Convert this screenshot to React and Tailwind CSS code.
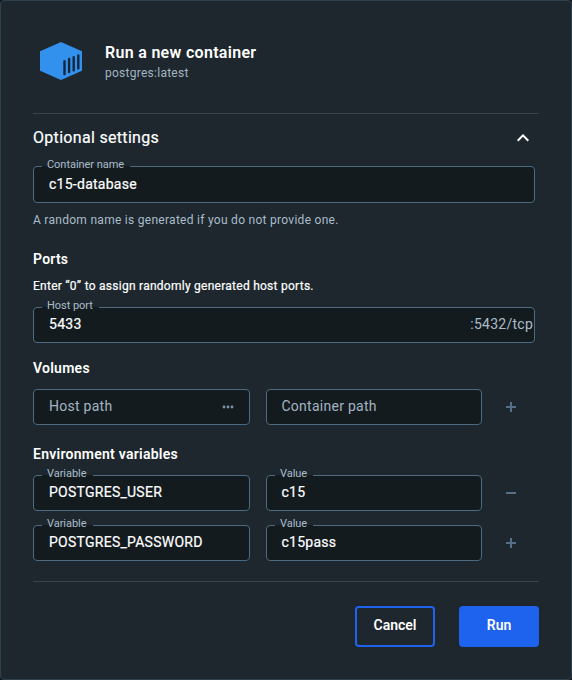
import React from "react";

function PlusIcon() {
  return (
    <svg width="10" height="10" viewBox="0 0 10 10" fill="#5d7890" shapeRendering="crispEdges">
      <path d="M4 0h2v4h4v2H6v4H4V6H0V4h4z" fillOpacity="0.9" />
    </svg>
  );
}

function MinusIcon() {
  return (
    <svg width="10" height="10" viewBox="0 0 10 10" fill="#5d7890" shapeRendering="crispEdges">
      <rect x="0" y="4" width="10" height="2" fillOpacity="0.9" />
    </svg>
  );
}

function ContainerIcon() {
  return (
    <svg width="42" height="38" viewBox="0 0 42 38">
      <path d="M21 0 42 9.2V28.8L21 38 0 28.8V9.2Z" fill="#3391ee" />
      <g stroke="#14273a" strokeWidth="2.4" strokeLinecap="round">
        <path d="M24.5 19.2V32M29.1 16.9V30M33.7 15.1V28.4M38.3 13.4V26.4" />
      </g>
    </svg>
  );
}

function Field({ label, value, placeholder, className = "", children }) {
  return (
    <div className={`relative flex items-center rounded bg-[#141b1f] ${className}`}>
      <fieldset className="pointer-events-none absolute inset-x-0 -top-[8px] bottom-0 min-w-0 rounded border border-[#4c6a82] px-[8px]">
        {label ? (
          <legend className="h-[17px] pl-[5px] pr-[6px] text-[11px] leading-[13px] tracking-[-0.04px] text-[#aabccb]">{label}</legend>
        ) : (
          <legend className="h-[17px] w-0" />
        )}
      </fieldset>
      <span
        className={`grow pb-[2px] text-[14px] leading-[20px] tracking-[0.26px] ${value ? "text-white [-webkit-text-stroke:0.2px_white]" : "text-[#a3b4c3]"}`}
      >
        {value || placeholder}
      </span>
      {children}
    </div>
  );
}

export default function App() {
  return (
    <div className="h-[680px] w-[572px] bg-[#12181b] font-['Roboto',sans-serif] text-white">
      <div className="flex h-full flex-col rounded-[4px] border border-[#2d3f4d] bg-[#1d272d] pl-8 pr-8">
        <header className="flex h-[112px] items-center gap-[23px] pt-2 pl-[7px]">
          <ContainerIcon />
          <div className="flex flex-col pt-[2px]">
            <h1 className="text-[16px] font-semibold leading-[22px] tracking-[0.3px]">Run a new container</h1>
            <p className="text-[12px] leading-[18px] tracking-[0.26px] text-[#a3b4c3]">postgres:latest</p>
          </div>
        </header>
        <div className="h-px bg-[#36444b]" />

        <div className="flex h-[52px] items-center justify-between pr-[10px] pb-[4px]">
          <h2 className="text-[16px] leading-6 tracking-[0.31px] [-webkit-text-stroke:0.2px_white]">Optional settings</h2>
          <svg width="12" height="8" viewBox="0 0 12 8" fill="none" stroke="#fff" strokeWidth="2">
            <path d="M0.7 6.7 6 1.4l5.3 5.3" />
          </svg>
        </div>

        <Field label="Container name" value="c15-database" className="h-[37px] w-[502px] pl-4" />
        <p className="mt-[8px] text-[12px] leading-[18px] tracking-[0.28px] text-[#aabccb]">
          A random name is generated if you do not provide one.
        </p>

        <h3 className="mt-[20px] text-[14px] font-semibold leading-[20px] tracking-[0.24px]">Ports</h3>
        <p className="mt-[8px] text-[12px] leading-[18px] tracking-[0.26px] [-webkit-text-stroke:0.2px_white]">
          Enter “0” to assign randomly generated host ports.
        </p>
        <Field label="Host port" value="5433" className="mt-[12px] h-[36px] w-[502px] pl-4">
          <span className="pr-[2px] pb-[2px] text-[14px] leading-[20px] tracking-[0.26px] text-[#aabccb]">:5432/tcp</span>
        </Field>

        <h3 className="mt-[15px] text-[14px] font-semibold leading-[20px] tracking-[0.26px]">Volumes</h3>
        <div className="mt-[11px] flex items-center">
          <Field placeholder="Host path" className="h-[36px] w-[217px] pl-4 pr-4">
            <svg width="12" height="4" viewBox="0 0 12 4" fill="#7c94a8">
              <circle cx="2" cy="2" r="1.4" />
              <circle cx="6" cy="2" r="1.4" />
              <circle cx="10" cy="2" r="1.4" />
            </svg>
          </Field>
          <Field placeholder="Container path" className="ml-4 h-[36px] w-[216px] pl-[15.5px]" />
          <div className="ml-6">
            <PlusIcon />
          </div>
        </div>

        <h3 className="mt-[19px] text-[14px] font-semibold leading-[20px] tracking-[0.26px]">Environment variables</h3>
        <div className="mt-[11px] flex items-center">
          <Field label="Variable" value="POSTGRES_USER" className="h-[36px] w-[217px] pl-4" />
          <Field label="Value" value="c15" className="ml-4 h-[36px] w-[216px] pl-[15.5px]" />
          <div className="ml-6">
            <MinusIcon />
          </div>
        </div>
        <div className="mt-[14px] flex items-center">
          <Field label="Variable" value="POSTGRES_PASSWORD" className="h-[36px] w-[217px] pl-4" />
          <Field label="Value" value="c15pass" className="ml-4 h-[36px] w-[216px] pl-[15.5px]" />
          <div className="ml-6">
            <PlusIcon />
          </div>
        </div>

        <div className="mt-[20px] h-px shrink-0 bg-[#36444b]" />
        <footer className="mt-6 flex justify-end gap-6">
          <button className="h-[41px] w-20 rounded border-2 border-[#1d63ed] pb-[2px] text-[14px] font-semibold">Cancel</button>
          <button className="h-[41px] w-20 rounded bg-[#1d63ed] pb-[2px] text-[14px] font-semibold">Run</button>
        </footer>
      </div>
    </div>
  );
}
